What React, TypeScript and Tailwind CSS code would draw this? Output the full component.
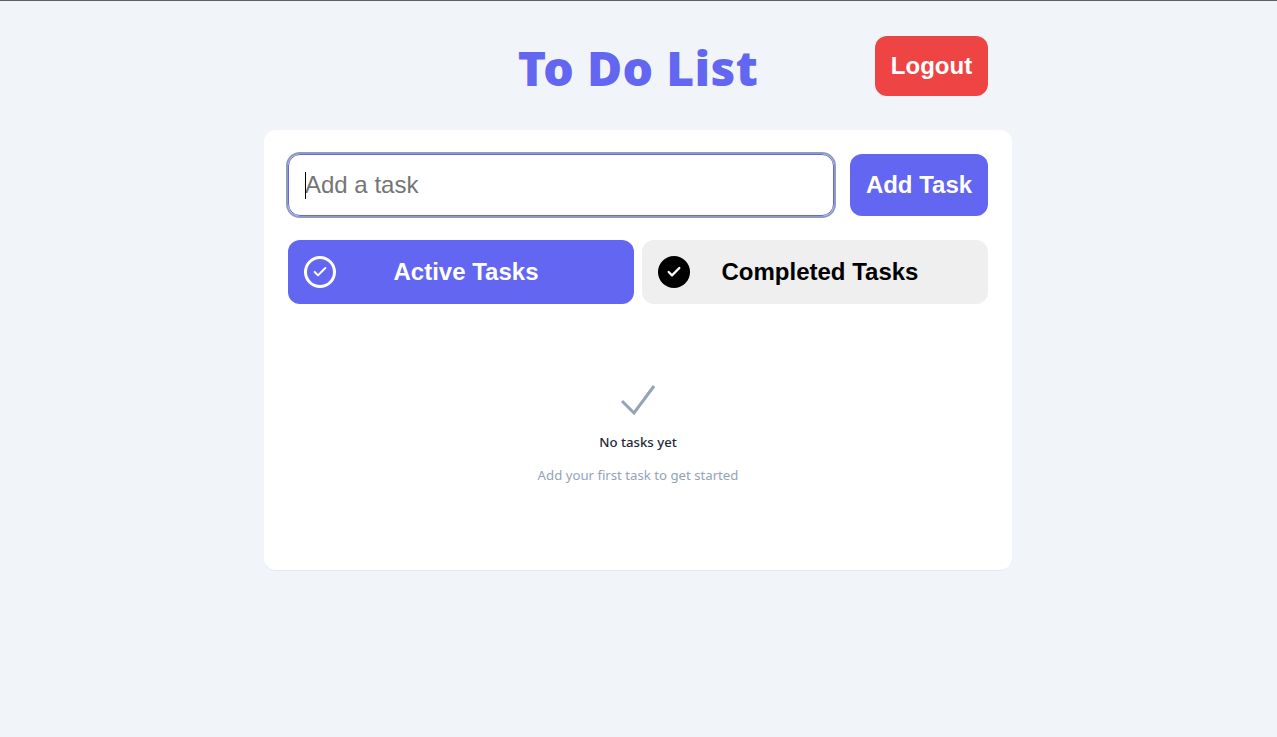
import { useState } from "react";
import { Check } from "lucide-react";

type Tab = "active" | "completed";

export default function App() {
  const [tab, setTab] = useState<Tab>("active");
  const [task, setTask] = useState("");

  return (
    <main className="min-h-[737px] border-t border-[#5f6368] bg-[#f1f5f9] font-['Noto_Sans',sans-serif]">
      <div className="ml-[264px] w-[748px] pt-[35px]">
        <header className="relative mb-[34px] flex h-[60px] items-center justify-center">
          <h1 className="mt-1 font-['Noto_Sans',sans-serif] text-[48px] leading-none font-black tracking-[0.35px] text-[#6366f1]">
            To Do List
          </h1>
          <button
            type="button"
            className="absolute top-0 right-6 h-[60px] w-[113px] rounded-xl bg-[#ef4444] font-['Liberation_Sans',sans-serif] text-2xl font-bold text-white"
          >
            Logout
          </button>
        </header>

        <section className="h-[441px] rounded-xl border-b border-[#e2e8f0] bg-white p-6">
          <div className="flex items-center gap-4">
            <div className="relative">
              <input
                value={task}
                onChange={(event) => setTask(event.target.value)}
                placeholder="Add a task"
                className="h-[62px] w-[546px] rounded-xl border border-[#6366f1] px-[16px] font-['Liberation_Sans',sans-serif] text-2xl text-black outline-2 outline-[#8f9dbb] placeholder:text-[#757575]"
              />
              <span className="absolute top-[18px] left-[17px] h-[27px] w-px bg-black" />
            </div>
            <button
              type="button"
              className="h-[62px] w-[138px] rounded-xl bg-[#6366f1] font-['Liberation_Sans',sans-serif] text-2xl font-bold text-white"
            >
              Add Task
            </button>
          </div>

          <div className="mt-6 flex gap-2">
            <TabButton
              label="Active Tasks"
              selected={tab === "active"}
              onClick={() => setTab("active")}
              icon={
                <span className="flex h-8 w-8 items-center justify-center rounded-full border-[3px] border-white text-white">
                  <Check size={16} strokeWidth={3} />
                </span>
              }
            />
            <TabButton
              label="Completed Tasks"
              selected={tab === "completed"}
              onClick={() => setTab("completed")}
              icon={
                <span className="flex h-8 w-8 items-center justify-center rounded-full bg-black text-white">
                  <Check size={16} strokeWidth={3.5} />
                </span>
              }
            />
          </div>

          <div className="mt-[76px] flex flex-col items-center">
            <svg width="40" height="40" viewBox="0 0 40 40" fill="none" className="text-[#94a3b8]">
              <path d="M4 21 L16 33 L36 6" stroke="currentColor" strokeWidth="3" />
            </svg>
            <p className="mt-[13px] text-[13.2px] leading-[18px] font-medium text-[#1e293b]">No tasks yet</p>
            <p className="mt-[15px] text-[13.2px] leading-[18px] text-[#94a3b8]">Add your first task to get started</p>
          </div>
        </section>
      </div>
    </main>
  );
}

function TabButton({
  label,
  selected,
  icon,
  onClick,
}: {
  label: string;
  selected: boolean;
  icon: React.ReactNode;
  onClick: () => void;
}) {
  return (
    <button
      type="button"
      onClick={onClick}
      className={`flex h-16 w-[346px] items-center rounded-xl pr-[38px] pl-4 font-['Liberation_Sans',sans-serif] text-2xl font-bold ${
        selected ? "bg-[#6366f1] text-white" : "bg-[#efefef] text-black"
      }`}
    >
      {icon}
      <span className="flex-1 text-center">{label}</span>
    </button>
  );
}
